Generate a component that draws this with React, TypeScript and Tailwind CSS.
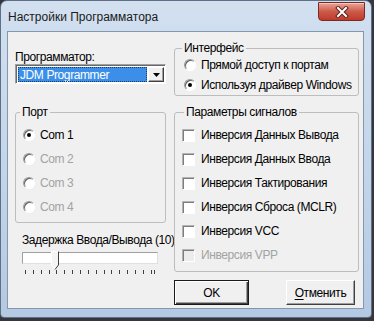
import React from "react";

function Radio({ label, checked, disabled }: { label: string; checked?: boolean; disabled?: boolean }) {
  return (
    <div className="flex items-center gap-[5px] h-full">
      <span className="relative w-[12px] h-[12px] rounded-full border border-t-[#9a9a9a] border-l-[#9a9a9a] border-r-white border-b-white shadow-[inset_1px_1px_0_#606060] bg-white flex items-center justify-center shrink-0">
        {checked && <span className="w-[4px] h-[4px] rounded-full bg-black" />}
      </span>
      <span className={`whitespace-nowrap ${disabled ? "text-[#a3a3a3]" : "text-black"}`}>{label}</span>
    </div>
  );
}

function Check({ label, disabled }: { label: string; disabled?: boolean }) {
  return (
    <div className="flex items-center gap-[6px] h-[24px]">
      <span
        className={`w-[13px] h-[13px] shrink-0 border border-t-[#b4b4b4] border-l-[#b4b4b4] border-r-white border-b-white shadow-[inset_1px_1px_0_#7c7c7c] ${
          disabled ? "bg-[#ececec]" : "bg-white"
        }`}
      />
      <span className={`whitespace-nowrap ${disabled ? "text-[#a3a3a3]" : "text-black"}`}>{label}</span>
    </div>
  );
}

export default function App() {
  const ticks = Array.from({ length: 17 }, (_, i) => 3 + i * 7.85);
  return (
    <div className="w-[374px] h-[321px] bg-[#34383e] overflow-hidden font-['Liberation_Sans',Arial,sans-serif] text-[12px] leading-[14px]">
      <div className="w-[372px] h-[318px] flex flex-col rounded-t-[7px] rounded-b-[4px] border border-[#5e6f86] bg-gradient-to-b from-[#d2e0f0] via-[#c4d6ea] to-[#b4c9e2] pl-[6px] pr-[7px] pb-[8px]">
        {/* title bar */}
        <div className="h-[30px] flex items-start justify-between">
          <span className="mt-[9px] ml-[1px] text-[#1b1b1b]">Настройки Программатора</span>
          <button className="mt-[1px] -mr-[1px] w-[47px] h-[19px] rounded-b-[4px] border border-[#7a2a22] bg-gradient-to-b from-[#e8a598] via-[#cc5a4a] to-[#c0392b] shadow-[inset_0_1px_0_#f4c8bf] flex items-center justify-center">
            <svg width="14" height="12" viewBox="0 0 14 12">
              <path d="M3 2 L11 10 M11 2 L3 10" stroke="#5a2520" strokeWidth="4" strokeLinecap="square" />
              <path d="M3 2 L11 10 M11 2 L3 10" stroke="#ffffff" strokeWidth="2" strokeLinecap="square" />
            </svg>
          </button>
        </div>

        {/* client area */}
        <div className="flex-1 border border-[#8497ae] bg-[#f0f0f0] flex gap-[8px] pl-[7px] tracking-[-0.4px]">
          {/* left column */}
          <div className="w-[151px] flex flex-col">
            <span className="mt-[18px]">Программатор:</span>
            <div className="h-[20px] flex border border-t-[#a0a0a0] border-l-[#a0a0a0] border-r-white border-b-white shadow-[inset_1px_1px_0_#696969] bg-white pl-[2px] pt-[2px] pr-[1px] pb-[1px]">
              <div className="flex-1 bg-[#3b8fe8] outline outline-1 outline-dotted outline-[#1b3d66] -outline-offset-1 text-white pl-[2px] flex items-center whitespace-nowrap">
                JDM Programmer
              </div>
              <div className="w-[16px] ml-[1px] bg-[#f0f0f0] border border-t-white border-l-white border-r-[#404040] border-b-[#404040] shadow-[inset_-1px_-1px_0_#a0a0a0] flex items-center justify-center">
                <svg width="7" height="4" viewBox="0 0 7 4">
                  <path d="M0 0 H7 L3.5 4 Z" fill="#000" />
                </svg>
              </div>
            </div>

            <fieldset className="mt-[21px] border border-[#bdbdbd] rounded-[3px] pb-[3px]">
              <legend className="ml-[4px] px-[2px]">Порт</legend>
              <div className="pt-[4px] pl-[7px] flex flex-col">
                <div className="h-[24px]"><Radio label="Com 1" checked /></div>
                <div className="h-[24px]"><Radio label="Com 2" disabled /></div>
                <div className="h-[24px]"><Radio label="Com 3" disabled /></div>
                <div className="h-[24px]"><Radio label="Com 4" disabled /></div>
              </div>
            </fieldset>

            <span className="mt-[10px] ml-[7px] whitespace-nowrap">Задержка Ввода/Вывода (10)</span>
            <div className="relative mt-[5px] ml-[7px] w-[136px] h-[12px] bg-white border border-t-[#a0a0a0] border-l-[#a0a0a0] border-r-[#e0e0e0] border-b-[#e0e0e0]">
              <svg className="absolute left-[28px] -top-[2px]" width="9" height="20" viewBox="0 0 9 20">
                <path d="M0.5 0.5 H7.5 V14 L4 18.5 L0.5 14 Z" fill="#f4f4f4" stroke="#ffffff" />
                <path d="M7.5 0.5 V14 L4 18.5" fill="none" stroke="#404040" />
              </svg>
            </div>
            <svg className="mt-[6px] ml-[7px]" width="136" height="4" viewBox="0 0 136 4">
              {ticks.map((x) => (
                <rect key={x} x={Math.round(x)} y="0" width="1" height="4" fill="#404040" />
              ))}
              <rect x="132" y="0" width="1" height="4" fill="#404040" />
            </svg>
          </div>

          {/* right column */}
          <div className="w-[185px] flex flex-col">
            <fieldset className="mt-[9px] border border-[#bdbdbd] rounded-[3px]">
              <legend className="ml-[7px] px-[2px]">Интерфейс</legend>
              <div className="pl-[9px] flex flex-col">
                <div className="h-[20px]"><Radio label="Прямой доступ к портам" /></div>
                <div className="h-[20px]"><Radio label="Используя драйвер Windows" checked /></div>
              </div>
            </fieldset>

            <fieldset className="mt-[9px] border border-[#bdbdbd] rounded-[3px] pb-[4px]">
              <legend className="ml-[9px] px-[2px]">Параметры сигналов</legend>
              <div className="pt-[4px] pl-[7px] flex flex-col">
                <Check label="Инверсия Данных Вывода" />
                <Check label="Инверсия Данных Ввода" />
                <Check label="Инверсия Тактирования" />
                <Check label="Инверсия Сброса (MCLR)" />
                <Check label="Инверсия VCC" />
                <Check label="Инверсия VPP" disabled />
              </div>
            </fieldset>

            <div className="mt-[8px] flex gap-[37px]">
              <button className="w-[75px] h-[25px] bg-[#f0f0f0] border border-[#1a1a1a] shadow-[inset_1px_1px_0_#fff,inset_-1px_-1px_0_#404040,inset_-2px_-2px_0_#a0a0a0] text-black">
                OK
              </button>
              <button className="w-[69px] h-[25px] bg-[#f0f0f0] border border-t-white border-l-white border-r-[#404040] border-b-[#404040] shadow-[inset_-1px_-1px_0_#a0a0a0] text-black">
                <span className="underline underline-offset-2">О</span>тменить
              </button>
            </div>
          </div>
        </div>
      </div>
    </div>
  );
}
